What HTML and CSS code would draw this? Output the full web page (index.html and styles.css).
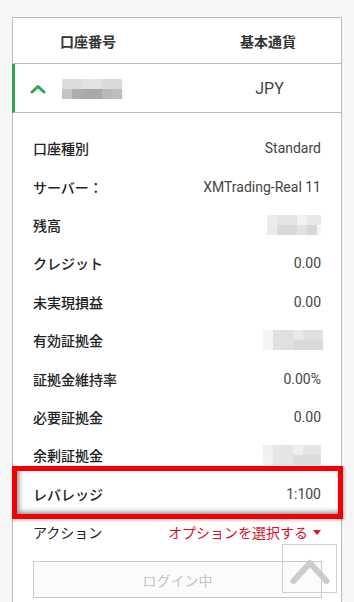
FILE: index.html
```html
<!DOCTYPE html>
<html lang="ja">
<head>
  <meta charset="UTF-8" />
  <title>口座情報</title>
  <link rel="stylesheet" href="styles.css">
</head>
<body>
  <div class="card">
    <div class="head">
      <div class="col-left">口座番号</div>
      <div class="col-right">基本通貨</div>
    </div>

    <div class="account">
      <div class="col-left">
        <svg class="chevron" width="16" height="10" viewBox="0 0 16 10">
          <polyline points="2,8 8,2.5 14,8" fill="none" stroke="#2aa84a" stroke-width="3" stroke-linecap="round" stroke-linejoin="round"/>
        </svg>
        <span class="blur blur-account"></span>
      </div>
      <div class="col-right currency">JPY</div>
    </div>

    <div class="details">
      <div class="row"><span class="label">口座種別</span><span class="value">Standard</span></div>
      <div class="row"><span class="label">サーバー：</span><span class="value">XMTrading-Real 11</span></div>
      <div class="row"><span class="label">残高</span><span class="blur blur-a"></span></div>
      <div class="row"><span class="label">クレジット</span><span class="value">0.00</span></div>
      <div class="row"><span class="label">未実現損益</span><span class="value">0.00</span></div>
      <div class="row"><span class="label">有効証拠金</span><span class="blur blur-b"></span></div>
      <div class="row"><span class="label">証拠金維持率</span><span class="value">0.00%</span></div>
      <div class="row"><span class="label">必要証拠金</span><span class="value">0.00</span></div>
      <div class="row"><span class="label">余剰証拠金</span><span class="blur blur-c"></span></div>
      <div class="row highlight"><span class="label">レバレッジ</span><span class="value">1:100</span></div>
      <div class="row"><span class="label light">アクション</span><span class="action">オプションを選択する<span class="caret"></span></span></div>

      <button class="login" disabled>ログイン中</button>
    </div>
  </div>

  <a class="to-top" href="#">
    <svg width="55" height="49" viewBox="0 0 55 49">
      <polyline points="11.5,37 28,19 44.5,37" fill="none" stroke="#cccccc" stroke-width="6" stroke-linecap="round" stroke-linejoin="round"/>
    </svg>
  </a>
</body>
</html>
```

FILE: styles.css
```css
body {
  margin: 0;
  padding: 17px 12px 0;
  background: #f6f6f6;
  font-family: Roboto, "Noto Sans CJK JP", sans-serif;
  font-size: 14px;
  color: #333;
  overflow: hidden;
  height: 585px;
}
.card {
  background: #fff;
  border: 1px solid #bbb;
  padding-bottom: 40px;
}
.head, .account {
  display: grid;
  grid-template-columns: 182px 1fr;
  align-items: center;
  border-bottom: 1px solid #bbb;
}
.head {
  height: 45px;
  font-weight: 700;
  font-size: 14px;
}
.head .col-left {
  padding-left: 47px;
}
.col-right {
  text-align: center;
}
.account {
  height: 48px;
  margin-left: -1px;
  border-left: 3px solid #2aa84a;
}
.account .col-left {
  display: flex;
  align-items: center;
  padding-left: 15px;
}
.chevron {
  display: block;
  margin-top: 1px;
}
.currency {
  font-size: 16px;
  color: #444;
  padding-left: 1px;
}
.blur {
  display: inline-block;
  width: 60px;
  height: 20px;
  background:
    linear-gradient(90deg, #dcdcdc 0 20px, #e2e2e2 20px 40px, #dadada 40px 60px) top / 100% 10px no-repeat,
    linear-gradient(90deg, #c4c4c4 0 10px, #adadad 10px 20px, #a9a9a9 20px 40px, #b8b8b8 40px 50px, #bdbdbd 50px 60px) bottom / 100% 10px no-repeat;
}
.blur-account {
  margin-left: 16px;
  margin-top: 2px;
  box-shadow: 7px 5px 0 -5px #eef8fc;
}
.details {
  padding: 16px 20px 0;
}
.row {
  display: flex;
  justify-content: space-between;
  align-items: center;
  height: 38.4px;
  position: relative;
}
.label {
  font-weight: 500;
  color: #222;
}
.label.light {
  font-weight: 400;
}
.value {
  color: #444;
}
.blur-a {
  width: 54px;
  background:
    linear-gradient(90deg, #ececec 0 10px, #e4e4e4 10px 30px, #f2f2f2 30px 40px, #e8e8e8 40px 54px) top / 100% 10px no-repeat,
    linear-gradient(90deg, #ebebe6 0 10px, #d9d9d9 10px 30px, #e2e2e2 30px 40px, #d6d6d6 40px 50px, #eef6fa 50px 54px) bottom / 100% 10px no-repeat;
}
.blur-b {
  width: 60px;
  margin-right: -2px;
  background:
    linear-gradient(90deg, #f4f4f4 0 10px, #e0e0e0 10px 30px, #e8e8e8 30px 40px, #e0e0e0 40px 60px) top / 100% 10px no-repeat,
    linear-gradient(90deg, #f4f4f4 0 10px, #e0e0e0 10px 30px, #dadada 30px 60px) bottom / 100% 10px no-repeat;
}
.blur-c {
  width: 58px;
  background:
    linear-gradient(90deg, #f0f0f0 0 10px, #e6e6e6 10px 30px, #eeeeee 30px 40px, #e4e4e4 40px 58px) top / 100% 10px no-repeat,
    linear-gradient(90deg, #f2f2f2 0 10px, #e6e6e6 10px 30px, #dddddd 30px 58px) bottom / 100% 10px no-repeat;
}
.highlight::after {
  content: "";
  position: absolute;
  left: -21px;
  right: -22px;
  top: -9px;
  bottom: -6px;
  border: 5px solid #f20000;
  box-shadow: inset 2px -2px 5px rgba(0, 0, 0, 0.45), 1px 1px 3px rgba(0, 0, 0, 0.3);
}
.action {
  color: #d8102a;
  display: flex;
  align-items: center;
}
.caret {
  width: 0;
  height: 0;
  margin-left: 5px;
  border-left: 4px solid transparent;
  border-right: 4px solid transparent;
  border-top: 5px solid #d8102a;
}
.login {
  display: block;
  width: 289px;
  height: 37px;
  margin-top: 10px;
  background: #fbfbfb;
  border: 1px solid #c8c8c8;
  color: #c4c4c4;
  font-family: inherit;
  font-size: 14px;
}
.to-top {
  position: fixed;
  right: 17px;
  bottom: 9px;
  width: 53px;
  height: 47px;
  border: 1px solid #cfcfcf;
  display: block;
}
.to-top svg {
  display: block;
  margin: -1px;
}
```
